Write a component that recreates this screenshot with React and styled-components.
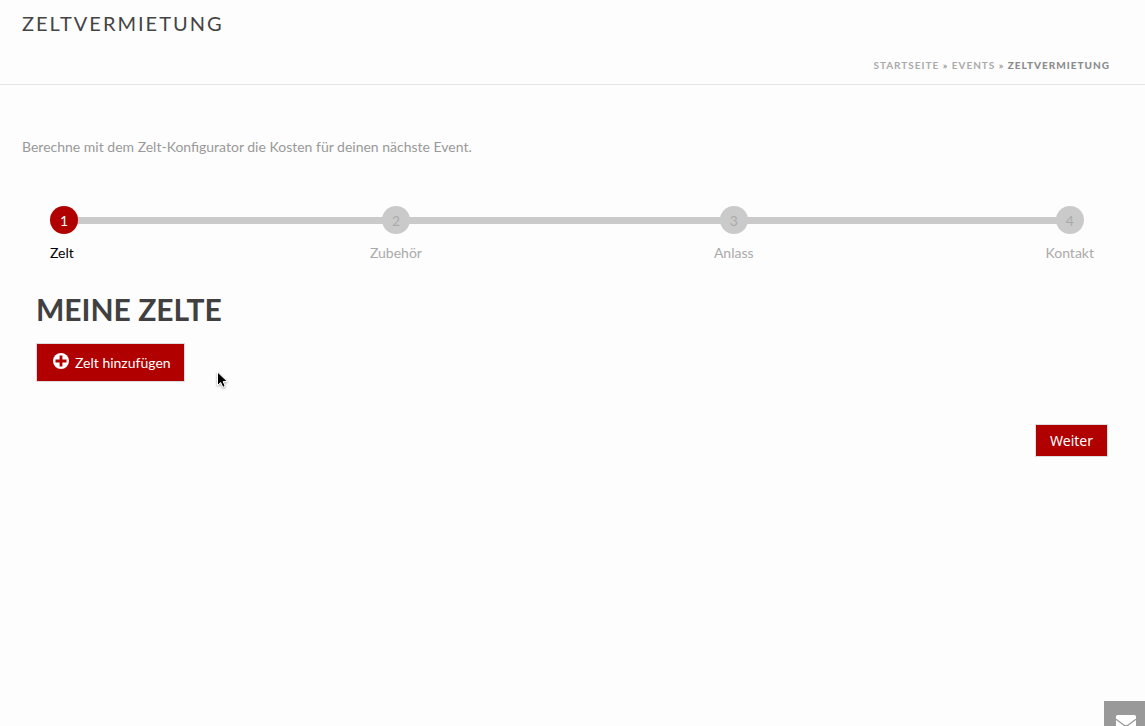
import React from "react";
import styled, { createGlobalStyle } from "styled-components";

const GlobalStyle = createGlobalStyle`
  *, *::before, *::after { box-sizing: border-box; }
  body {
    margin: 0;
    background: #fdfdfd;
    color: #999;
    font-family: Lato, "Liberation Sans", sans-serif;
    font-size: 14px;
    line-height: 20px;
  }
`;

const Page = styled.div`
  min-height: 100vh;
  overflow: hidden;
`;

const Header = styled.header`
  padding: 7px 22px 9px;
  border-bottom: 1px solid #e6e6e6;
`;

const Title = styled.h1`
  margin: 0;
  color: #444;
  font-size: 20px;
  font-weight: 400;
  line-height: 32px;
  letter-spacing: 2px;
  text-transform: uppercase;
`;

const Breadcrumb = styled.nav`
  margin-top: 16px;
  padding-right: 13px;
  text-align: right;
  color: #999;
  font-size: 10px;
  font-weight: 700;
  letter-spacing: 1px;
  text-transform: uppercase;
`;

const Crumb = styled.a`
  color: #aaa;
  text-decoration: none;
`;

const Current = styled.span`
  color: #8c8c8c;
  font-weight: 900;
`;

const Main = styled.main`
  padding: 52px 22px 0;
`;

const Intro = styled.p`
  margin: 0;
`;

const Configurator = styled.form`
  padding: 49px 15px 0 14px;
`;

const Steps = styled.ol`
  position: relative;
  display: flex;
  justify-content: space-between;
  margin: 0 14px;
  padding: 0;
  list-style: none;

  &::before {
    content: "";
    position: absolute;
    top: 11px;
    left: 14px;
    right: 24px;
    height: 7px;
    background: #cacaca;
  }
`;

const Step = styled.li`
  position: relative;
  display: flex;
  flex-direction: column;
  align-items: ${({ $active }) => ($active ? "flex-start" : "center")};
  gap: 9px;
  min-width: 28px;
  color: ${({ $active }) => ($active ? "#000" : "#aaa")};
`;

const StepNumber = styled.span`
  width: 28px;
  height: 28px;
  border-radius: 50%;
  background: ${({ $active }) => ($active ? "#b00000" : "#cacaca")};
  color: ${({ $active }) => ($active ? "#fff" : "#aaa")};
  line-height: 30px;
  text-align: center;
`;

const Heading = styled.h2`
  margin: 27px 0 15px;
  color: #404040;
  font-size: 30px;
  font-weight: 700;
  line-height: 38px;
  text-transform: uppercase;
`;

const Button = styled.button`
  display: inline-flex;
  align-items: center;
  border: 1px solid #ddd;
  background: #b00000;
  color: #fff;
  font-size: 14px;
  line-height: 20px;
  cursor: pointer;
`;

const AddButton = styled(Button)`
  gap: 6px;
  padding: 9px 13px 8px 16px;
  font-family: inherit;

  svg {
    margin-bottom: 4px;
  }
`;

const NextButton = styled(Button)`
  padding: 6px 14px 5px;
  font-family: "Noto Sans", sans-serif;
`;

const Actions = styled.div`
  display: flex;
  justify-content: flex-end;
  margin-top: 42px;
`;

const MailLink = styled.a`
  position: fixed;
  right: 0;
  bottom: -16px;
  display: flex;
  align-items: center;
  justify-content: center;
  width: 41px;
  height: 41px;
  padding-left: 3px;
  background: #999;
`;

const Pointer = styled.svg`
  position: absolute;
  top: 369px;
  left: 214px;
  filter: drop-shadow(0 1px 1px rgba(0, 0, 0, 0.35));
  pointer-events: none;
`;

const steps = ["Zelt", "Zubehör", "Anlass", "Kontakt"];

export default function App() {
  return (
    <Page>
      <GlobalStyle />
      <Header>
        <Title>Zeltvermietung</Title>
        <Breadcrumb aria-label="Breadcrumb">
          <Crumb href="#start">Startseite</Crumb> » <Crumb href="#events">Events</Crumb> »{" "}
          <Current aria-current="page">Zeltvermietung</Current>
        </Breadcrumb>
      </Header>
      <Main>
        <Intro>Berechne mit dem Zelt-Konfigurator die Kosten für deinen nächste Event.</Intro>
        <Configurator>
          <Steps>
            {steps.map((label, i) => (
              <Step key={label} $active={i === 0} aria-current={i === 0 ? "step" : undefined}>
                <StepNumber $active={i === 0}>{i + 1}</StepNumber>
                <span>{label}</span>
              </Step>
            ))}
          </Steps>
          <Heading>Meine Zelte</Heading>
          <AddButton type="button">
            <svg width="16" height="16" viewBox="0 0 16 16" aria-hidden="true">
              <circle cx="8" cy="8" r="8" fill="#fff" />
              <path d="M8 2.5v11M2.5 8h11" stroke="#b00000" strokeWidth="2.8" />
            </svg>
            Zelt hinzufügen
          </AddButton>
          <Actions>
            <NextButton type="button">Weiter</NextButton>
          </Actions>
        </Configurator>
      </Main>
      <MailLink href="#kontakt" aria-label="Kontakt">
        <svg width="20" height="14" viewBox="0 0 20 14" aria-hidden="true">
          <rect width="20" height="14" rx="1.5" fill="#fff" />
          <path d="M0 4.2 8.4 10.4Q10 11.4 11.6 10.4L20 4.2" fill="none" stroke="#999" strokeWidth="1.3" />
        </svg>
      </MailLink>
      <Pointer width="16" height="22" viewBox="0 0 16 22" aria-hidden="true">
        <path
          d="M3.5 3v13.5l3.2-3 2.1 4.8 2.4-1-2-4.8h4.2Z"
          fill="#000"
          stroke="#fff"
          strokeWidth="1"
        />
      </Pointer>
    </Page>
  );
}
